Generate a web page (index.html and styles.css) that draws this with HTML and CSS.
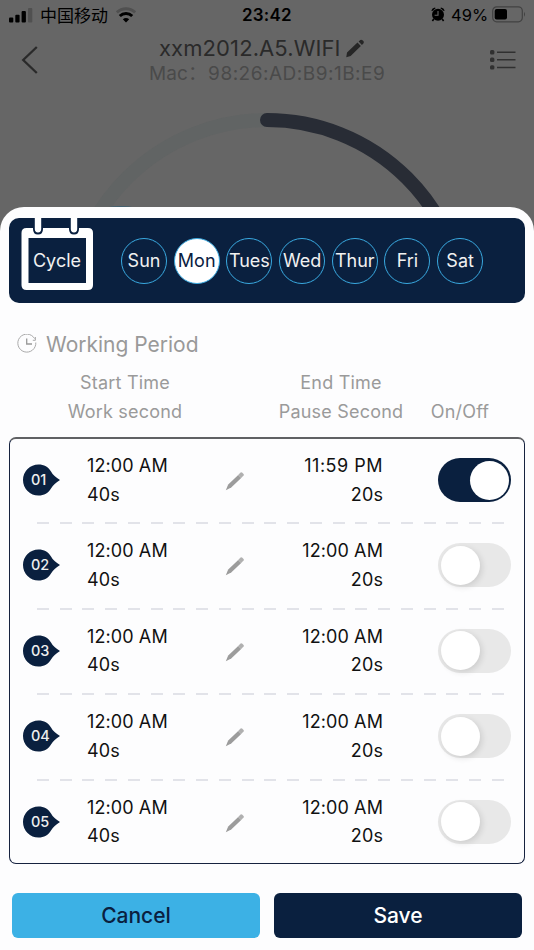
FILE: index.html
```html
<!DOCTYPE html>
<html lang="en">
<head>
    <meta charset="UTF-8">
    <meta name="viewport" content="width=device-width, initial-scale=1.0">
    <title>Working Period</title>
    <link rel="stylesheet" href="styles.css">
</head>
<body>
    <!-- shared icons -->
    <svg width="0" height="0" class="defs">
        <symbol id="pencil" viewBox="0 0 20 20">
            <path d="M.8 19.2 L1.6 14.2 L12.6 3.8 L16.2 7.4 L5.4 18 Z M13.8 2.7 L15.6 1 Q16.8 .2 17.9 1.3 L18.8 2.2 Q19.8 3.3 19 4.5 L17.3 6.3 Z"/>
        </symbol>
        <symbol id="edit" viewBox="0 0 20 20">
            <path d="M.8 19.2 L3.2 13.6 L13.2 4 L16.2 7 L6.2 16.6 Z"/>
            <path d="M13.2 4 L15.6 1.6 Q16.4 .9 17.3 1.7 L18.5 2.9 Q19.3 3.8 18.6 4.6 L16.2 7 Z" opacity=".8"/>
        </symbol>
        <symbol id="tag" viewBox="0 0 40 34">
            <path d="M16.5 1.5 C22 1.5 26.5 4 29 8.5 Q31 12.5 38 17 Q31 21.5 29 25.5 C26.5 30 22 32.5 16.5 32.5 A15.5 15.5 0 0 1 16.5 1.5 Z"/>
        </symbol>
    </svg>

    <div class="status">
        <svg class="signal" width="24" height="16" viewBox="0 0 24 16">
            <rect x="0" y="10.5" width="4.3" height="5" rx="1"/>
            <rect x="6.3" y="7.7" width="4.3" height="7.8" rx="1"/>
            <rect x="12.6" y="4" width="4.3" height="11.5" rx="1"/>
            <rect x="19" y="1" width="4.3" height="14.5" rx="1" fill="#505050"/>
        </svg>
        <span class="carrier">中国移动</span>
        <svg class="wifi" width="20" height="16" viewBox="0 0 20 16" fill="none" stroke-width="3">
            <path d="M.9 5.4 A13.5 13.5 0 0 1 19.1 5.4" stroke="#505050"/>
            <path d="M3.8 9 A9 9 0 0 1 16.2 9" stroke="#000"/>
            <path d="M10 15.5 L6.8 12.3 A5 5 0 0 1 13.2 12.3 Z" fill="#000"/>
        </svg>
        <span class="clock">23:42</span>
        <svg class="alarm" width="14" height="15" viewBox="0 0 14 15">
            <circle cx="7" cy="7.8" r="6"/>
            <path d="M.4 3.6 Q1 .8 4 .5 L4.6 1.2 L1 4.3 Z M13.6 3.6 Q13 .8 10 .5 L9.4 1.2 L13 4.3 Z"/>
            <path d="M2.8 12 L1.4 14 M11.2 12 L12.6 14" stroke="#000" stroke-width="1.6"/>
            <path d="M7 4 V8.2 H3.6" fill="none" stroke="#666" stroke-width="1.1"/>
        </svg>
        <span class="percent">49%</span>
        <svg class="battery" width="34" height="17" viewBox="0 0 34 17">
            <rect x=".7" y=".8" width="29.6" height="15" rx="4" fill="none" stroke="#424242" stroke-width="1.2"/>
            <rect x="2.7" y="3" width="12.3" height="10.6" rx="2"/>
            <path d="M32 5.8 Q34 8.3 32 10.8 Z" fill="#424242"/>
        </svg>
    </div>

    <header>
        <svg class="back" width="18" height="30" viewBox="0 0 18 30">
            <path d="M15.8 2 L2.2 15 L15.8 28" fill="none" stroke="#2a2a2a" stroke-width="2.3"/>
        </svg>
        <div class="device">
            <h1>xxm2012.A5.WIFI <svg width="20" height="19"><use href="#pencil"/></svg></h1>
            <p>Mac：<span>98:26:AD:B9:1B:E9</span></p>
        </div>
        <svg class="menu" width="28" height="22" viewBox="0 0 28 22" fill="#303030">
            <rect x="1" y="1" width="4.4" height="4.4" rx="1.5"/>
            <rect x="1" y="8.6" width="4.4" height="4.4" rx="1.5"/>
            <rect x="1" y="16.2" width="4.4" height="4.4" rx="1.5"/>
            <path d="M8 3.2 H26.5 M8 10.8 H26.5 M8 18.4 H26.5" stroke="#303030" stroke-width="1.5"/>
        </svg>
    </header>

    <div class="dial">
        <svg width="534" height="130" viewBox="0 90 534 130" fill="none" stroke-width="14">
            <path d="M267 120 A198 198 0 0 0 69 318" stroke="#616464"/>
            <path d="M267 120 A198 198 0 0 1 465 318" stroke="#282c35" stroke-linecap="round"/>
            <path d="M106 207.5 Q120 205 136 207.5 Z" fill="#365f74" stroke="none"/>
        </svg>
    </div>

    <main class="sheet">
        <section class="week">
            <div class="cycle">
                <svg width="74" height="73" viewBox="0 0 74 73">
                    <path d="M5.5 10 H67 Q72 10 72 15 V67 Q72 72 67 72 H5.5 Q.5 72 .5 67 V15 Q.5 10 5.5 10 Z" fill="#fff"/>
                    <rect x="7.5" y="20" width="57.5" height="45" fill="#0a203f"/>
                    <path d="M12 0 V11 Q12 16.5 17 16.5 Q22 16.5 22 11 V0 Z M48 0 V11 Q48 16.5 53 16.5 Q58 16.5 58 11 V0 Z" fill="#0a203f"/>
                    <path d="M13.8 0 V11 Q13.8 14.4 17 14.4 Q20.2 14.4 20.2 11 V0 Z M49.8 0 V11 Q49.8 14.4 53 14.4 Q56.2 14.4 56.2 11 V0 Z" fill="#fff"/>
                </svg>
                <span>Cycle</span>
            </div>
            <div class="days">
                <span>Sun</span>
                <span class="active">Mon</span>
                <span>Tues</span>
                <span>Wed</span>
                <span>Thur</span>
                <span>Fri</span>
                <span>Sat</span>
            </div>
        </section>

        <h2>
            <svg width="20" height="20" viewBox="0 0 20 20" fill="none" stroke="#aaa" stroke-width="1">
                <path d="M17.6 4.6 A9 9 0 1 0 18.8 8.5 M18.4 3 V6.3 H15.8"/>
                <path d="M9.7 4.6 V10 H15" stroke="#999" stroke-width="1.3"/>
            </svg>
            <span>Working Period</span>
        </h2>

        <div class="heads">
            <p class="h-start">Start Time<br>Work second</p>
            <p class="h-end">End Time<br>Pause Second</p>
            <p class="h-switch">On/Off</p>
        </div>

        <section class="periods">
            <div class="row">
                <div class="num"><svg width="40" height="34"><use href="#tag"/></svg><b>01</b></div>
                <p class="start">12:00 AM<br>40s</p>
                <svg class="edit" width="20" height="20"><use href="#edit"/></svg>
                <p class="end"><span class="pm">11:59 PM</span><br>20s</p>
                <div class="switch on"><i></i></div>
            </div>
            <div class="row">
                <div class="num"><svg width="40" height="34"><use href="#tag"/></svg><b>02</b></div>
                <p class="start">12:00 AM<br>40s</p>
                <svg class="edit" width="20" height="20"><use href="#edit"/></svg>
                <p class="end">12:00 AM<br>20s</p>
                <div class="switch"><i></i></div>
            </div>
            <div class="row">
                <div class="num"><svg width="40" height="34"><use href="#tag"/></svg><b>03</b></div>
                <p class="start">12:00 AM<br>40s</p>
                <svg class="edit" width="20" height="20"><use href="#edit"/></svg>
                <p class="end">12:00 AM<br>20s</p>
                <div class="switch"><i></i></div>
            </div>
            <div class="row">
                <div class="num"><svg width="40" height="34"><use href="#tag"/></svg><b>04</b></div>
                <p class="start">12:00 AM<br>40s</p>
                <svg class="edit" width="20" height="20"><use href="#edit"/></svg>
                <p class="end">12:00 AM<br>20s</p>
                <div class="switch"><i></i></div>
            </div>
            <div class="row">
                <div class="num"><svg width="40" height="34"><use href="#tag"/></svg><b>05</b></div>
                <p class="start">12:00 AM<br>40s</p>
                <svg class="edit" width="20" height="20"><use href="#edit"/></svg>
                <p class="end">12:00 AM<br>20s</p>
                <div class="switch"><i></i></div>
            </div>
        </section>

        <div class="buttons">
            <button class="cancel">Cancel</button>
            <button class="save">Save</button>
        </div>
    </main>
</body>
</html>
```
FILE: styles.css
```css
* {
    box-sizing: border-box;
}

body {
    margin: 0;
    width: 534px;
    height: 950px;
    overflow: hidden;
    background: #666;
    font-family: Inter, "Noto Sans CJK SC", sans-serif;
    display: flex;
    flex-direction: column;
}

h1, h2, p {
    margin: 0;
    font-weight: 400;
}

svg {
    display: block;
    flex: none;
}

.defs {
    position: absolute;
}

/* status bar */
.status {
    height: 30px;
    display: flex;
    align-items: center;
    padding-left: 9px;
    color: #000;
    white-space: nowrap;
}

.signal {
    margin-top: -1px;
}

.carrier {
    width: 69px;
    margin-left: 7px;
    margin-top: -2px;
    font-size: 17px;
}

.wifi {
    margin-left: 7px;
    margin-top: -1px;
}

.clock {
    width: 52px;
    margin-left: 106px;
    font-size: 17px;
    font-weight: 600;
    letter-spacing: 0.2px;
}

.alarm {
    margin-left: 137px;
    margin-top: -2px;
}

.percent {
    width: 38px;
    margin-left: 6px;
    font-size: 16.5px;
}

.battery {
    margin-left: 3px;
    margin-top: -2px;
}

/* title */
header {
    height: 60px;
    display: flex;
    justify-content: space-between;
    padding: 0 17px 0 21px;
}

.back {
    margin-top: 15px;
}

.device {
    width: 240px;
    margin-left: 10px;
    color: #4a4a4a;
    white-space: nowrap;
}

.device h1 {
    display: flex;
    gap: 4px;
    height: 30px;
    padding-left: 10px;
    align-items: center;
    margin-top: 3px;
    font-size: 22px;
    line-height: 30px;
    color: #2a2a2a;
    letter-spacing: 0.1px;
}

.device h1 svg {
    fill: #262626;
}

.device p {
    font-size: 19px;
    line-height: 21px;
    letter-spacing: 0.1px;
}

.device p span {
    margin-left: 1px;
    letter-spacing: 0.5px;
}

.menu {
    margin-top: 19px;
}

.dial {
    height: 117px;
}

/* bottom sheet */
.sheet {
    height: 743px;
    flex: none;
    padding: 11px 9px 0;
    background: #fdfdfe;
    border-radius: 24px 24px 0 0;
}

.week {
    height: 85px;
    display: flex;
    padding-left: 12px;
    background: #0a203f;
    border-radius: 10px;
    color: #f1f1f1;
}

.cycle {
    display: grid;
    width: 74px;
    height: 73px;
}

.cycle svg, .cycle span {
    grid-area: 1 / 1;
}

.cycle span {
    padding-top: 31px;
    padding-right: 2px;
    text-align: center;
    font-size: 18px;
    line-height: 24px;
}

.days {
    display: flex;
    gap: 6.7px;
    margin: 20px 0 0 26px;
}

.days span {
    width: 46px;
    height: 46px;
    display: flex;
    align-items: center;
    justify-content: center;
    padding-bottom: 2px;
    border: 1.5px solid #39a9e0;
    border-radius: 50%;
    font-size: 18px;
    white-space: nowrap;
}

.days .active {
    background: #fff;
    color: #0a203f;
}

h2 {
    height: 38px;
    margin-top: 22px;
    padding-left: 8px;
    display: flex;
    align-items: center;
    gap: 9px;
    font-size: 21px;
    color: #999;
}

.heads {
    height: 68px;
    display: grid;
    grid-template-columns: 232px 200px 38px;
    margin-top: 6px;
    text-align: center;
    font-size: 18px;
    line-height: 28.5px;
    letter-spacing: 0.2px;
    color: #9a9a9a;
    white-space: nowrap;
}

.heads .h-switch {
    padding-top: 29px;
    justify-self: center;
}

/* table of periods */
.periods {
    height: 427px;
    border: 1.5px solid #16223f;
    border-top: 2px solid #606164;
    border-radius: 7px;
}

.row {
    height: 85.4px;
    display: grid;
    grid-template-columns: 77px 135px 42px 119px 1fr;
    font-size: 18px;
    line-height: 28.5px;
    color: #111;
    /* dashed divider */
    background: repeating-linear-gradient(90deg, #e2e3e9 0 12px, transparent 12px 22.75px) 27px 100% / 467px 2px no-repeat;
}

.row:last-child {
    background: none;
}

.num {
    display: grid;
    width: 40px;
    height: 34px;
    margin: 24px 0 0 12px;
}

.num svg, .num b {
    grid-area: 1 / 1;
}

.num svg {
    fill: #0a203f;
}

.num b {
    padding-left: 9px;
    font-size: 14.5px;
    font-weight: 500;
    line-height: 34px;
    color: #eee;
}

.start, .end {
    padding-top: 13px;
    white-space: nowrap;
    letter-spacing: 0.1px;
}

.end {
    text-align: right;
}

.pm {
    letter-spacing: 0.5px;
}

.edit {
    margin: 32px 0 0 3px;
    fill: #9c9c9c;
}

.switch {
    width: 73px;
    height: 44px;
    margin: 19px 0 0 55px;
    padding: 2.5px;
    border-radius: 22px;
    background: #e8e8e8;
}

.switch i {
    display: block;
    width: 39px;
    height: 39px;
    border-radius: 50%;
    background: #fff;
    box-shadow: 2px 2px 6px rgba(0, 0, 0, 0.12);
}

.switch.on {
    background: #0a203f;
}

.switch.on i {
    margin-left: 29px;
    box-shadow: none;
}

.buttons {
    display: grid;
    grid-template-columns: 248px 248px;
    gap: 14px;
    margin: 29px 0 0 3px;
}

button {
    height: 45px;
    padding: 0;
    border: 0;
    border-radius: 6px;
    font-family: inherit;
    font-size: 21px;
    font-weight: 500;
}

.cancel {
    background: #3cb1e5;
    color: #0a203f;
}

.save {
    background: #0a203f;
    color: #fff;
}
```
